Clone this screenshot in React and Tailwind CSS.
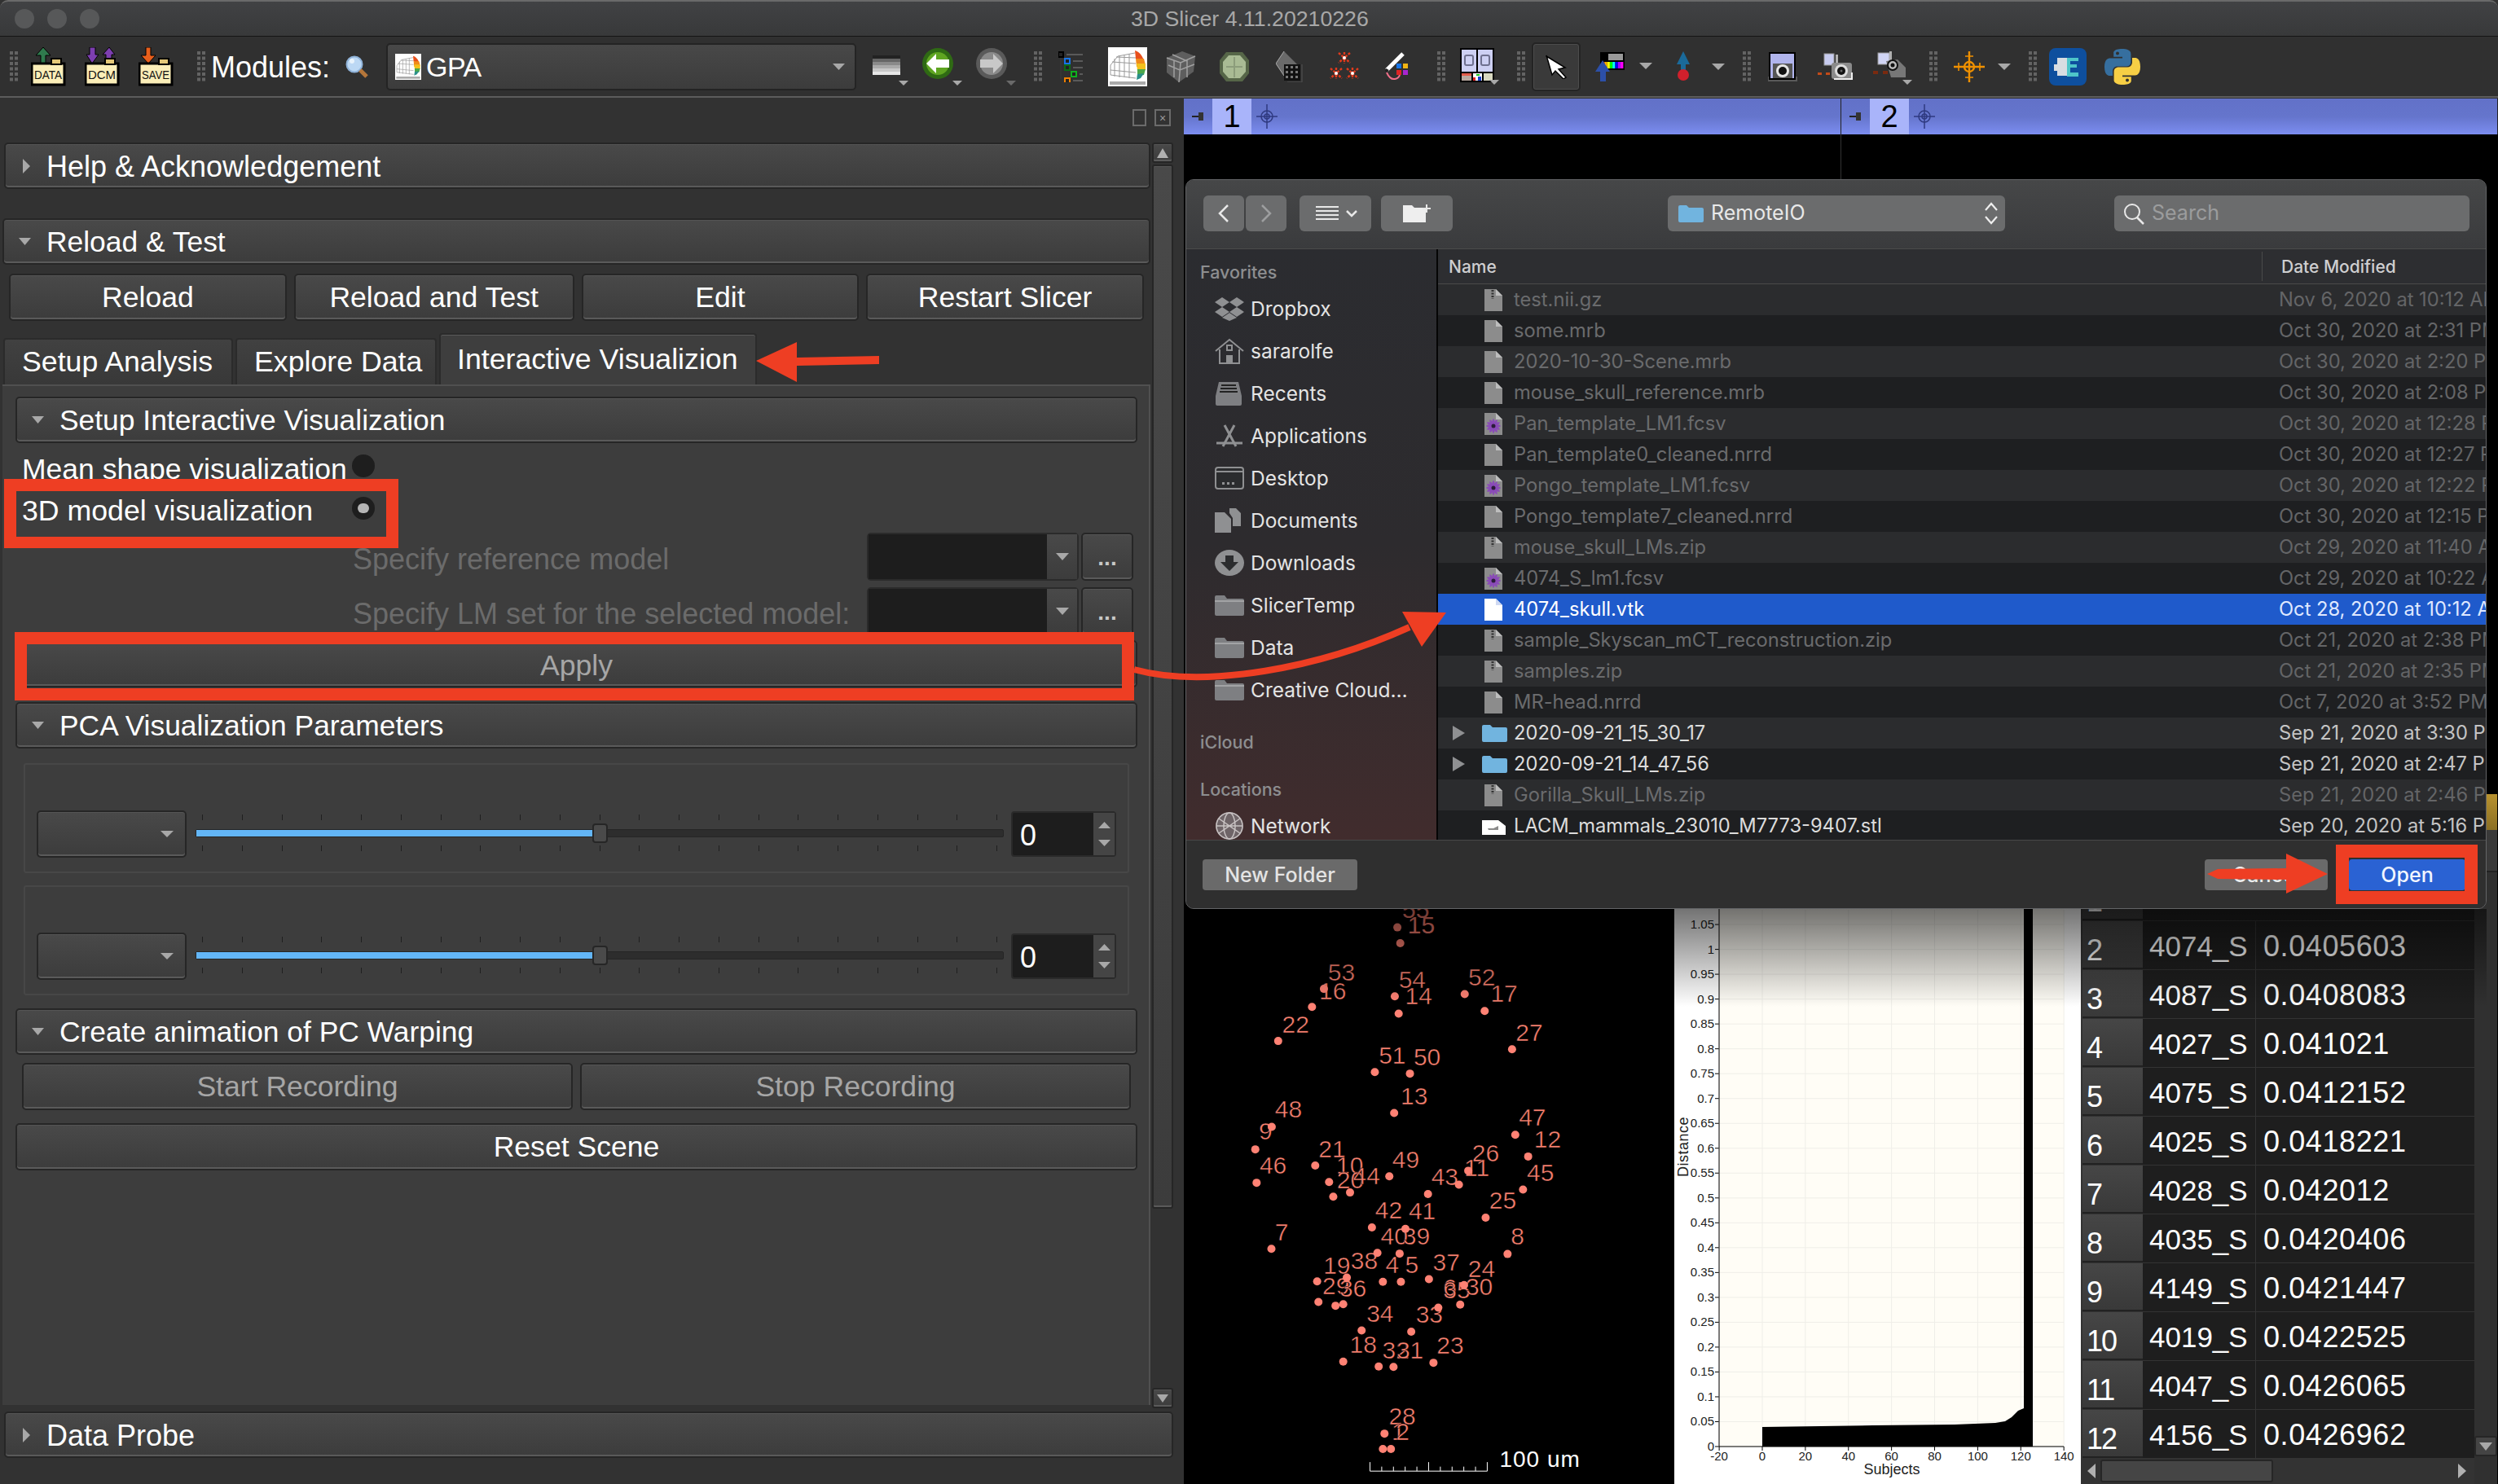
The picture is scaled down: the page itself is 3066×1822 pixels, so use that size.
import React from "react";

const RED = "#ee3e23";

function Grip({ className = "" }) {
  const c = [];
  for (let r = 0; r < 6; r++) for (let k = 0; k < 2; k++) c.push(<rect key={r + "-" + k} x={k * 6} y={r * 6.5} width="4" height="4" fill="#636363" />);
  return <svg width="10" height="37" className={"shrink-0 " + className}>{c}</svg>;
}
function Caret({ className = "", w = 14, h = 8, color = "#a8a8a8" }) {
  return <svg width={w} height={h} viewBox="0 0 14 8" preserveAspectRatio="none" className={"shrink-0 " + className}><polygon points="0,0 14,0 7,8" fill={color} /></svg>;
}
function DocTool({ label, arrows, className = "" }) {
  return (
    <svg width="44" height="48" viewBox="0 0 44 48" className={"shrink-0 " + className}>
      {arrows}
      <rect x="1" y="20" width="40" height="26" fill="#fbeeb8" stroke="#000" strokeWidth="3" />
      <rect x="25" y="14" width="12" height="7" fill="#e4c878" stroke="#000" strokeWidth="2" />
      <text x="21" y="39" fontSize="14" textLength="34" lengthAdjust="spacingAndGlyphs" textAnchor="middle" fill="#111">{label}</text>
    </svg>
  );
}
function GpaIcon({ size = 48, className = "" }) {
  return (
    <svg width={size} height={size} viewBox="0 0 48 48" className={"shrink-0 " + className}>
      <rect width="48" height="48" fill="#fff" />
      <g stroke="#9a9a9a" strokeWidth="1" fill="none">
        <path d="M3 22 L12 11 L33 7 M3 22 L3 34 L34 38 M8 14 L8 36 M14 11 L14 37 M20 10 L20 37 M26 8 L26 38 M3 28 L34 31 M5 18 L34 20 M10 12 L34 13" />
      </g>
      <path d="M33 4 C40 6 45 14 45 24 L44 18 L34 14Z" fill="#e8501c" />
      <path d="M34 14 L44 14 L46 22 L35 24Z" fill="#f08a1a" />
      <path d="M35 20 L46 20 L46 28 L36 29Z" fill="#f3c11c" />
      <path d="M36 27 L46 27 L44 34 L36 35Z" fill="#4da84a" />
      <path d="M36 33 L44 32 L40 38 L35 40Z" fill="#2a8f8a" />
      <rect x="2" y="42" width="44" height="4" fill="#aaa" />
    </svg>
  );
}
function ArrowBall({ dir, colorA, colorB }) {
  return (
    <svg width="49" height="48" viewBox="0 0 49 48" className="shrink-0">
      <circle cx="19" cy="20" r="19" fill={colorB} />
      <circle cx="19" cy="20" r="14" fill={colorA} />
      <polygon points={dir === "l" ? "5,20 17,8 17,15 33,15 33,25 17,25 17,32" : "33,20 21,8 21,15 5,15 5,25 21,25 21,32"} fill={dir === "l" ? "#fff" : "#c8c8c8"} />
      <polygon points="37,41 49,41 43,47" fill={dir === "l" ? "#a8a8a8" : "#6a6a6a"} />
    </svg>
  );
}
function CamIcon({ w = 44 }) {
  return (
    <svg width={w} height="34" viewBox="0 0 44 34" className="shrink-0">
      <rect x="8" y="1" width="12" height="14" fill="#c8ccf0" stroke="#999" />
      <path d="M0 25 L6 17 L14 17" stroke="#333" fill="none" />
      <rect x="0" y="24" width="5" height="3" fill="#c24a18" />
      <rect x="10" y="24" width="5" height="3" fill="#c24a18" />
      <rect x="22" y="2" width="3" height="12" fill="#b0b0b0" />
      <rect x="17" y="12" width="25" height="20" rx="3" fill="#8a8a8a" />
      <path d="M20 32 H42 V24" stroke="#eee" strokeWidth="2" fill="none" />
      <circle cx="29" cy="22" r="8" fill="#ddd" />
      <circle cx="29" cy="22" r="5" fill="#111" />
      <circle cx="29" cy="22" r="1.5" fill="#666" />
    </svg>
  );
}

function Toolbar() {
  return (
    <div className="flex h-[76px] shrink-0 items-center border-t border-[#151515] border-b-[2px] border-b-[#5c5c5c] bg-[#303030]">
      <Grip className="ml-[12px]" />
      <DocTool className="ml-[16px]" label="DATA" arrows={<g fill="#2f7a4d" stroke="#000"><polygon points="15,0 24,10 18,10 18,20 12,20 12,10 6,10" /></g>} />
      <DocTool className="ml-[22px]" label="DCM" arrows={<g fill="#7d3fb0" stroke="#000"><polygon points="6,20 14,9 10,9 10,0 3,0 3,9 -1,9" transform="translate(3 0)" /><polygon points="30,0 37,9 33,9 33,20 26,20 26,9 22,9" /></g>} />
      <DocTool className="ml-[22px]" label="SAVE" arrows={<g fill="#e85f1c" stroke="#000"><polygon points="12,20 21,10 15,10 15,0 9,0 9,10 3,10" /></g>} />
      <Grip className="ml-[28px]" />
      <span className="ml-[7px] w-[146px] pt-[2px] text-[36px] leading-none text-white">Modules:</span>
      <svg width="28" height="28" viewBox="0 0 28 28" className="ml-[19px] shrink-0">
        <circle cx="11" cy="11" r="9.5" fill="#bcd8f4" stroke="#8fb2d8" strokeWidth="2" />
        <circle cx="8" cy="7" r="3" fill="#e9f3fc" />
        <path d="M18 18 L26 26" stroke="#b5763a" strokeWidth="5" />
      </svg>
      <div className="ml-[22px] flex h-[58px] w-[577px] shrink-0 items-center rounded-[5px] border-2 border-[#242424] bg-linear-to-b from-[#484848] to-[#3c3c3c] pl-[9px] pr-[12px]">
        <GpaIcon size={32} />
        <span className="ml-[6px] text-[34px] leading-none tracking-[-0.5px] text-white">GPA</span>
        <Caret className="ml-auto" w={15} h={8} />
      </div>
      <svg width="44" height="48" viewBox="0 0 44 48" className="ml-[20px] shrink-0">
        <rect x="0" y="10" width="34" height="4" fill="#222" /><rect x="0" y="14" width="34" height="4" fill="#666" /><rect x="0" y="18" width="34" height="4" fill="#8a8a8a" /><rect x="0" y="22" width="34" height="4" fill="#aaa" /><rect x="0" y="26" width="34" height="4" fill="#c8c8c8" /><rect x="0" y="30" width="34" height="4" fill="#e6e6e6" />
        <polygon points="32,41 44,41 38,47" fill="#a8a8a8" />
      </svg>
      <div className="ml-[17px] shrink-0"><ArrowBall dir="l" colorA="#5fa521" colorB="#2f6a14" /></div>
      <div className="ml-[17px] shrink-0"><ArrowBall dir="r" colorA="#8a8a8a" colorB="#5a5a5a" /></div>
      <Grip className="ml-[22px]" />
      <svg width="40" height="38" viewBox="0 0 40 38" className="ml-[20px] shrink-0">
        <path d="M3 4 V34" stroke="#3a3a3a" />
        {[[0, 1, "#000"], [8, 9, "#1673e6"], [8, 17, "#0c6b16"], [16, 25, "#0fb01e"], [8, 33, "#f08000"]].map(([x, y, c], i) => (
          <g key={i}><rect x={x} y={y} width="6" height="6" fill="#222" stroke={c} strokeWidth="2" /><rect x={x + 10} y={y + 2} width={30 - x - 10} height="2" fill="#5a5a5a" /></g>
        ))}
      </svg>
      <div className="ml-[21px] shrink-0"><GpaIcon /></div>
      <svg width="40" height="42" viewBox="0 0 40 42" className="ml-[21px] shrink-0">
        <polygon points="3,10 22,2 38,8 36,27 18,40 3,28" fill="#5e5e5e" />
        <path d="M3 10 L20 16 L38 8 M20 16 L18 40 M10 6 L28 14 M12 13 L12 34 M28 12 L28 34 M5 19 L19 25 L37 18" stroke="#a0a0a0" strokeWidth="1.5" fill="none" />
      </svg>
      <svg width="40" height="40" viewBox="0 0 40 40" className="ml-[26px] shrink-0">
        <path d="M10 2 H30 L38 12 V28 L30 38 H10 L2 28 V12Z" fill="#566648" />
        <path d="M13 6 H27 L34 14 V26 L27 34 H13 L6 26 V14Z" fill="#a9bb94" />
        <path d="M20 8 V33 M10 20 H30" stroke="#8c9d7b" strokeWidth="2" />
      </svg>
      <svg width="36" height="38" viewBox="0 0 36 38" className="ml-[31px] shrink-0">
        <polygon points="10,0 26,16 10,30 0,15" fill="#6a6a6a" />
        <path d="M10 0 L0 15 L10 30" stroke="#aaa" fill="none" />
        <rect x="10" y="16" width="20" height="20" fill="#111" />
        {[12, 18, 24].map((x) => [18, 24, 30].map((y) => <rect key={x + "-" + y} x={x} y={y} width="3" height="3" fill="#777" />))}
        <path d="M32 16 V38 H14" stroke="#555" fill="none" />
      </svg>
      <svg width="36" height="36" viewBox="0 0 36 36" className="ml-[30px] shrink-0">
        {[[18, 7], [8, 26], [28, 26]].map(([x, y], i) => (
          <g key={i} stroke="#e23a1c" strokeWidth="2.4" strokeDasharray="3 1.5">
            <path d={`M${x - 7} ${y - 6} L${x + 7} ${y + 6} M${x + 7} ${y - 6} L${x - 7} ${y + 6} M${x} ${y - 7} V${y + 7}`} />
            <circle cx={x} cy={y} r="2" fill="#fff" stroke="none" />
          </g>
        ))}
      </svg>
      <svg width="28" height="36" viewBox="0 0 28 36" className="ml-[32px] shrink-0">
        <path d="M2 22 L22 2" stroke="#fff" strokeWidth="5" />
        <path d="M1 24 L3 21" stroke="#222" strokeWidth="4" />
        <rect x="14" y="14" width="6" height="6" fill="#1673e6" /><rect x="22" y="14" width="6" height="6" fill="#f0b414" /><rect x="14" y="22" width="6" height="6" fill="#e02424" /><rect x="22" y="22" width="6" height="6" fill="#a825d0" />
        <path d="M2 25 Q6 34 12 33 Q17 32 18 28" stroke="#f0708a" strokeWidth="2" fill="none" />
      </svg>
      <Grip className="ml-[36px]" />
      <svg width="48" height="46" viewBox="0 0 48 46" className="ml-[18px] shrink-0">
        <rect x="0" y="0" width="42" height="42" fill="#000" />
        <rect x="2" y="2" width="18" height="27" fill="#cdd0f3" /><rect x="22" y="2" width="18" height="27" fill="#cdd0f3" />
        <rect x="6" y="9" width="10" height="12" rx="2" fill="none" stroke="#6f7190" strokeWidth="2" /><rect x="26" y="9" width="10" height="12" rx="2" fill="none" stroke="#6f7190" strokeWidth="2" />
        <rect x="2" y="31" width="12" height="9" fill="#b9a8a0" /><rect x="2" y="31" width="12" height="3" fill="#e25b4b" />
        <rect x="16" y="31" width="11" height="9" fill="#fff" /><rect x="16" y="36" width="3" height="4" fill="#e02424" /><rect x="22" y="35" width="4" height="5" fill="#1a3fd0" /><rect x="20" y="32" width="4" height="2" fill="#1ec81e" />
        <rect x="29" y="31" width="11" height="9" fill="#d8d8c0" />
        <polygon points="36,39 48,39 42,45" fill="#a8a8a8" />
      </svg>
      <Grip className="ml-[22px]" />
      <div className="ml-[8px] flex h-[60px] w-[60px] shrink-0 items-center justify-center rounded-[5px] border-2 border-[#242424] bg-[#3a3a3a] shadow-[inset_0_0_0_1px_#4c4c4c]">
        <svg width="26" height="30" viewBox="0 0 26 30"><polygon points="1,1 1,2 24,16 16,18 25,28 22,30 12,20 8,25" fill="#fff" stroke="#000" strokeWidth="1.5" /></svg>
      </div>
      <svg width="70" height="40" viewBox="0 0 70 40" className="ml-[18px] shrink-0">
        <rect x="6" y="2" width="30" height="22" fill="#000" />
        <rect x="16" y="4" width="18" height="8" fill="#999" />
        {["#f00", "#fa0", "#ff0", "#0f0", "#0ff", "#00f", "#a0f", "#f0f"].map((c, i) => <rect key={c} x={8 + i * 3.3} y="14" width="3.3" height="8" fill={c} />)}
        <polygon points="9,12 18,26 13,26 13,38 6,38 6,26 0,26" fill="#2c4fa8" />
        <polygon points="54,15 70,15 62,23" fill="#a8a8a8" />
      </svg>
      <svg width="18" height="38" viewBox="0 0 18 38" className="ml-[29px] shrink-0">
        <polygon points="9,0 17,16 12,16 12,26 6,26 6,16 1,16" fill="#1a6a9a" />
        <circle cx="9" cy="29" r="7" fill="#d0202c" />
      </svg>
      <Caret className="ml-[26px]" w={16} h={8} />
      <Grip className="ml-[22px]" />
      <svg width="36" height="36" viewBox="0 0 36 36" className="ml-[21px] shrink-0">
        <rect x="0" y="30" width="36" height="6" fill="#5a5a5a" />
        <rect x="2" y="1" width="31" height="32" fill="#b0b4ec" stroke="#000" strokeWidth="2" />
        <rect x="6" y="14" width="24" height="18" fill="#555" />
        <circle cx="18" cy="23" r="8" fill="#e6e6e6" />
        <circle cx="18" cy="23" r="5" fill="#111" />
      </svg>
      <div className="ml-[25px] shrink-0"><CamIcon /></div>
      <svg width="48" height="46" viewBox="0 0 48 46" className="ml-[24px] shrink-0">
        <rect x="6" y="6" width="14" height="14" fill="#d0d4f4" stroke="#999" />
        <rect x="20" y="4" width="3" height="12" fill="#b0b0b0" />
        <rect x="0" y="28" width="6" height="4" fill="#7a2a10" /><rect x="12" y="28" width="6" height="4" fill="#7a2a10" />
        <polygon points="16,16 30,14 40,24 40,36 22,36" fill="#777" />
        <circle cx="24" cy="21" r="6" fill="#bbb" stroke="#111" strokeWidth="2" /><circle cx="24" cy="21" r="2.5" fill="#111" />
        <polygon points="36,39 48,39 42,45" fill="#a8a8a8" />
      </svg>
      <Grip className="ml-[21px]" />
      <svg width="38" height="38" viewBox="0 0 38 38" className="ml-[20px] shrink-0">
        <g stroke="#ef9000" strokeWidth="2.4" fill="none">
          <path d="M19 0 V38 M0 19 H38" /><circle cx="19" cy="19" r="6" />
          <path d="M14 6 H24 M14 32 H24 M6 14 V24 M32 14 V24" strokeWidth="1.6" />
        </g>
      </svg>
      <Caret className="ml-[16px]" w={16} h={8} />
      <Grip className="ml-[22px]" />
      <svg width="46" height="46" viewBox="0 0 46 46" className="ml-[15px] shrink-0">
        <rect width="46" height="46" rx="8" fill="#0e4f9e" />
        <path d="M10 12 H22 V20 H26 V28 H22 V34 H10 V28 H6 V20 H10Z" fill="#d8dde2" />
        <path d="M22 12 H36 V16 H26 V20 H34 V24 H26 V30 H36 V35 H22Z" fill="#4ec5c9" />
      </svg>
      <svg width="48" height="48" viewBox="0 0 24 24" className="ml-[20px] shrink-0">
        <path fillRule="evenodd" fill="#366f9f" d="M11.9 1C6.3 1 6.6 3.4 6.6 3.4v2.5h5.4v.8H4.5S1 6.3 1 12s3.1 5.5 3.1 5.5H6v-2.6s-.1-3.1 3-3.1h5.3s2.9 0 2.9-2.8V4s.4-3-5.3-3zM9 2.7a1 1 0 110 2 1 1 0 010-2z" />
        <path fillRule="evenodd" fill="#f7cf45" d="M12.1 23c5.6 0 5.3-2.4 5.3-2.4v-2.5H12v-.8h7.5s3.5.4 3.5-5.3-3.1-5.5-3.1-5.5H18v2.6s.1 3.1-3 3.1H9.7s-2.9 0-2.9 2.8V20s-.4 3 5.3 3zm2.9-1.7a1 1 0 110-2 1 1 0 010 2z" />
      </svg>
    </div>
  );
}

const frame = "border-2 border-[#262626] bg-linear-to-b from-[#494949] to-[#3c3c3c] shadow-[inset_0_-2px_0_#5a5a5a,inset_0_1px_0_#555]";

function CollapseHeader({ label, open = true, className = "" }) {
  return (
    <div className={"flex h-[57px] shrink-0 items-center rounded-[5px] " + frame + " " + className}>
      {open ? (
        <Caret w={15} h={9} className="ml-[18px]" />
      ) : (
        <svg width="9" height="18" className="ml-[21px] shrink-0"><polygon points="0,0 9,9 0,18" fill="#a8a8a8" /></svg>
      )}
      <span className={(open ? "ml-[19px] text-[35.4px]" : "ml-[20px] text-[36px]") + " pt-[2px] leading-none text-white"}>{label}</span>
    </div>
  );
}
function QtButton({ children, className = "", dim = false }) {
  return (
    <div className={"flex h-[58px] items-center justify-center rounded-[5px] pt-[2px] text-[35.6px] leading-none " + frame + " " + (dim ? "text-[#a6a6a6] " : "text-white ") + className}>
      {children}
    </div>
  );
}
function Radio({ checked, className = "" }) {
  return (
    <span className={"flex h-[28px] w-[28px] shrink-0 items-center justify-center rounded-full bg-[#1e1e1e] " + className}>
      {checked && <span className="h-[12px] w-[14px] rounded-full bg-[#b5b5b5]" />}
    </span>
  );
}
function ComboRow({ label, className = "" }) {
  return (
    <div className={"flex h-[59px] shrink-0 items-center " + className}>
      <span className="ml-[414px] w-[631px] whitespace-nowrap pt-[6px] text-[36px] leading-none text-[#6b6b6b]">{label}</span>
      <div className="flex h-[59px] w-[260px] rounded-[5px] border-2 border-[#2b2b2b] bg-[#4a4a4a]">
        <div className="w-[219px] bg-[#1d1d1d]" />
        <div className="flex flex-1 items-center justify-center bg-linear-to-b from-[#494949] to-[#3c3c3c]"><Caret w={16} h={9} /></div>
      </div>
      <div className={"ml-[3px] flex h-[59px] w-[64px] items-end justify-center rounded-[5px] pb-[12px] text-[28px] font-bold leading-none text-[#c8c8c8] " + frame}>...</div>
    </div>
  );
}
const TICKS = Array.from({ length: 21 }, (_, i) => i);
function Ticks({ className = "" }) {
  return (
    <div className={"flex h-[7px] justify-between px-[8px] " + className}>
      {TICKS.map((i) => <span key={i} className="h-[7px] w-px bg-[#1f1f1f]" />)}
    </div>
  );
}
function SliderGroup() {
  return (
    <div className="mx-[10px] flex h-[135px] shrink-0 items-start rounded-[3px] border-2 border-[#474747] pl-[14px] pt-[56px]">
      <div className={"flex h-[58px] w-[184px] shrink-0 items-center justify-end rounded-[5px] pr-[14px] " + frame}><Caret w={16} h={8} /></div>
      <div className="ml-[11px] w-[992px] shrink-0 pt-[5px]">
        <Ticks />
        <div className="relative mt-[11px] h-[10px] rounded-[2px] border border-[#252525] bg-[#2d2d2d]">
          <div className="h-full w-[487px] bg-[#63b6f7]" />
          <div className="absolute left-[486px] top-[-8px] h-[24px] w-[19px] rounded-[4px] border-2 border-[#262626] bg-[#4a4a4a]" />
        </div>
        <Ticks className="mt-[10px]" />
      </div>
      <div className="ml-[9px] mt-[1px] flex h-[56px] w-[129px] shrink-0 rounded-[4px] border-2 border-[#2a2a2a] bg-[#1d1d1d]">
        <span className="ml-[9px] flex-1 pt-[10px] text-[36px] leading-none text-white">0</span>
        <div className="flex w-[26px] flex-col items-center justify-around bg-[#454545] py-[4px]">
          <svg width="15" height="8"><polygon points="7.5,0 15,8 0,8" fill="#a8a8a8" /></svg>
          <Caret w={15} h={8} />
        </div>
      </div>
    </div>
  );
}

function TabBtn({ label, active, w }) {
  return (
    <div className={"flex items-center rounded-t-[4px] border-2 border-b-0 border-[#2b2b2b] text-[35.7px] leading-none text-white " + w + " " + (active ? "h-[64px] bg-[#3e3e3e] pl-[20px] shadow-[inset_0_1px_0_#5a5a5a]" : "h-[58px] bg-linear-to-b from-[#414141] to-[#383838] pl-[21px]")}>
      {label}
    </div>
  );
}

function LeftPanel() {
  return (
    <div className="flex w-[1453px] shrink-0 flex-col bg-[#323232] pl-[3px]">
      <div className="flex h-[54px] shrink-0 items-start justify-end pr-[16px] pt-[13px]">
        <span className="h-[21px] w-[17px] border-2 border-[#6b6b6b]" />
        <span className="ml-[10px] flex h-[21px] w-[20px] items-center justify-center border-2 border-[#6b6b6b] text-[14px] leading-none text-[#9a9a9a]">×</span>
      </div>
      <div className="flex flex-1 min-h-0">
        <div className="flex w-[1409px] shrink-0 flex-col pb-[4px]">
          <CollapseHeader label="Help & Acknowledgement" open={false} className="ml-[2px]" />
          <CollapseHeader label="Reload & Test" className="mt-[36px]" />
          <div className="mt-[11px] flex gap-[9px] pl-[8px] pr-[8px]">
            <QtButton className="w-[341px]">Reload</QtButton>
            <QtButton className="w-[344px]">Reload and Test</QtButton>
            <QtButton className="w-[341px]">Edit</QtButton>
            <QtButton className="w-[341px]">Restart Slicer</QtButton>
          </div>
          <div className="mt-[15px] flex h-[64px] items-end gap-[3px] pl-[1px]">
            <TabBtn label="Setup Analysis" w="w-[282px]" />
            <TabBtn label="Explore Data" w="w-[247px]" />
            <TabBtn label="Interactive Visualizion" active w="w-[390px]" />
          </div>
          <div className="-mt-[1px] flex flex-1 flex-col border-t-2 border-r-2 border-[#505050] bg-[#3d3d3d] pl-[16px] pr-[14px] pt-[13px]">
            <CollapseHeader label="Setup Interactive Visualization" />
            <div className="flex h-[50px] shrink-0 items-center pl-[8px] pt-[16px] text-[35.5px] leading-none text-white">
              <span className="w-[405px] whitespace-nowrap">Mean shape visualization</span><Radio className="-mt-[10px]" />
            </div>
            <div className="flex h-[50px] shrink-0 items-center pl-[8px] pt-[18px] text-[35.7px] leading-none text-white">
              <span className="w-[405px] whitespace-nowrap">3D model visualization</span><Radio checked className="-mt-[8px]" />
            </div>
            <ComboRow label="Specify reference model" className="mt-[10px]" />
            <ComboRow label="Specify LM set for the selected model:" className="mt-[8px]" />
            <QtButton dim className="mt-[6px] shrink-0 pt-[5px]">Apply</QtButton>
            <CollapseHeader label="PCA Visualization Parameters" className="mt-[18px]" />
            <div className="h-[18px] shrink-0" />
            <SliderGroup />
            <div className="h-[15px] shrink-0" />
            <SliderGroup />
            <CollapseHeader label="Create animation of PC Warping" className="mt-[16px]" />
            <div className="mt-[10px] flex shrink-0 gap-[9px] px-[8px]">
              <QtButton dim className="flex-1">Start Recording</QtButton>
              <QtButton dim className="flex-1">Stop Recording</QtButton>
            </div>
            <QtButton className="mt-[16px] shrink-0">Reset Scene</QtButton>
          </div>
        </div>
        <div className="ml-[2px] flex w-[26px] shrink-0 flex-col">
          <div className={"flex h-[25px] items-center justify-center rounded-[3px] " + frame}><svg width="14" height="12"><polygon points="7,0 14,12 0,12" fill="#b0b0b0" /></svg></div>
          <div className={"mt-[2px] h-[1282px] rounded-[3px] " + frame} />
          <div className="flex-1" />
          <div className={"flex h-[25px] items-center justify-center rounded-[3px] " + frame}><Caret w={14} h={10} /></div>
        </div>
      </div>
      <CollapseHeader label="Data Probe" open={false} className="ml-[2px] mb-[32px] mr-[13px] mt-[4px]" />
    </div>
  );
}

function Pin({ className = "" }) {
  return <svg width="16" height="16" viewBox="0 0 16 16" className={"shrink-0 " + className}><rect x="0" y="7" width="10" height="2" fill="#222" /><polygon points="8,3 14,3 14,13 8,13" fill="#333" /></svg>;
}
function Cross({ className = "" }) {
  return (
    <svg width="26" height="30" viewBox="0 0 26 30" className={"shrink-0 " + className}>
      <g fill="none" stroke="#2f3a80" strokeWidth="1.5"><circle cx="13" cy="15" r="7" /><circle cx="13" cy="15" r="3" /><path d="M13 0 V30 M0 15 H26" /></g>
    </svg>
  );
}
function ViewBar({ n, w }) {
  return (
    <div className={"flex h-[44px] items-stretch border-r border-[#222] bg-linear-to-b from-[#6271c8] via-[#6575cc] to-[#7c8df0] " + w}>
      <Pin className="ml-[10px] self-center" />
      <span className="ml-[9px] flex w-[48px] items-center justify-center bg-[#a9b4fa] text-[38px] leading-none text-black">{n}</span>
      <Cross className="ml-[6px] self-center" />
    </div>
  );
}

const LM = {
  t: [["53",457,227],["16",430,277],["54",677,247],["14",697,292],["52",893,242],["17",962,285],["22",315,367],["27",1040,388],["51",615,450],["50",723,453],["13",683,558],["48",293,594],["9",243,652],["47",1050,615],["12",1097,674],["21",428,699],["10",483,742],["46",245,743],["20",485,783],["44",535,770],["49",657,727],["26",905,711],["11",880,750],["43",778,774],["45",1075,763],["25",958,836],["42",604,863],["41",708,865],["40",621,932],["39",690,932],["7",293,920],["8",1025,932],["19",443,1010],["38",528,998],["4",636,1008],["5",697,1008],["37",783,1002],["24",892,1018],["29",440,1064],["36",493,1070],["6",815,1068],["35",815,1076],["30",885,1067],["34",577,1138],["33",730,1140],["18",525,1220],["32",626,1236],["31",670,1236],["23",795,1223],["28",646,1412],["1",655,1452],["2",668,1452]],
  d: [[445,250],[408,298],[665,270],[677,316],[882,264],[944,309],[303,389],[1029,411],[603,472],[712,476],[663,581],[283,618],[232,678],[1039,639],[1079,697],[418,721],[236,767],[461,765],[474,804],[526,793],[648,750],[893,735],[864,772],[768,797],[1063,785],[947,860],[594,886],[698,890],[611,954],[680,956],[282,943],[1015,957],[424,1030],[516,1020],[628,1031],[684,1031],[771,1024],[880,1040],[428,1085],[481,1095],[505,1091],[868,1092],[800,1100],[562,1161],[716,1164],[505,1244],[615,1257],[661,1258],[785,1247],[633,1436],[628,1477],[653,1477]],
};
const X = (z) => 1450 + z / 2.529;
const Y = (z) => 1100 + z / 2.172;

function Landmarks() {
  const tick = [];
  for (let i = 0; i <= 10; i++) tick.push(<path key={i} d={`M${X(588 + i * 36.4)} ${Y(1536)} V${Y(i % 5 === 0 ? 1512 : 1524)}`} />);
  return (
    <div className="relative w-[602px] shrink-0 bg-black">
      <svg viewBox="1454 976 602 846" width="602" height="846" className="absolute left-0 top-0">
        <text x={X(688)} y={Y(60)} fontSize="30" fill="#fa7f70">55</text>
        <text x={X(705)} y={Y(103)} fontSize="30" fill="#fa7f70">15</text>
        <circle cx={X(673)} cy={Y(86)} r="5" fill="#fa7f70" /><circle cx={X(682)} cy={Y(128)} r="5" fill="#fa7f70" />
        {LM.t.map(([s, x, y], i) => <text key={i} x={X(x)} y={Y(y)} fontSize="30" fill="#f8806f" stroke="#000" strokeWidth="0.5" paintOrder="fill">{s}</text>)}
        {LM.d.map(([x, y], i) => <circle key={i} cx={X(x)} cy={Y(y)} r="5" fill="#ff8274" />)}
        <g stroke="#fff" strokeWidth="1" fill="none">
          <path d={`M${X(588)} ${Y(1536)} H${X(952)}`} />
          {tick}
        </g>
        <text x={X(990)} y={Y(1525)} fontSize="28" fill="#fff" letterSpacing="1">100 um</text>
      </svg>
    </div>
  );
}

function Chart() {
  const yt = [];
  for (let i = 0; i <= 21; i++) {
    const v = i * 0.05;
    const label = i % 20 === 0 ? String(i / 20) : i % 2 === 0 ? String(i / 20) : v.toFixed(2);
    const y = 1777 - i * 30.52;
    yt.push(
      <g key={i}>
        <path d={`M2111 ${y} H2534`} stroke="#efeee8" />
        <path d={`M2106 ${y} H2111`} stroke="#000" />
        <text x="2105" y={y + 5} fontSize="15" textAnchor="end" fill="#222">{label}</text>
      </g>
    );
  }
  const xt = [-20, 0, 20, 40, 60, 80, 100, 120, 140].map((v) => {
    const x = 2164 + v * 2.644;
    return (
      <g key={v}>
        <path d={`M${x} 1118 V1777`} stroke="#efeee8" />
        <path d={`M${x} 1777 V1782`} stroke="#000" />
        <text x={x} y="1794" fontSize="15" textAnchor="middle" fill="#222">{v}</text>
      </g>
    );
  });
  return (
    <div className="w-[499px] shrink-0 bg-white">
      <svg viewBox="2056 976 499 846" width="499" height="846">
        <rect x="2111" y="976" width="423" height="801" fill="#fffdf6" />
        {yt}{xt}
        <path d="M2164 1777 V1753 L2300 1751 L2400 1750 L2450 1748 L2462 1746 L2470 1741 L2478 1733 L2485 1730 V976 H2496 V1777Z" fill="#000" />
        <path d="M2111 976 V1777 H2534" stroke="#000" fill="none" />
        <text transform="translate(2073 1409) rotate(-90)" fontSize="18" textAnchor="middle" fill="#222" letterSpacing="0.5">Distance</text>
        <text x="2323" y="1811" fontSize="18" textAnchor="middle" fill="#222">Subjects</text>
      </svg>
    </div>
  );
}

const ROWS = [["2","4074_S","0.0405603"],["3","4087_S","0.0408083"],["4","4027_S","0.041021"],["5","4075_S","0.0412152"],["6","4025_S","0.0418221"],["7","4028_S","0.042012"],["8","4035_S","0.0420406"],["9","4149_S","0.0421447"],["10","4019_S","0.0422525"],["11","4047_S","0.0426065"],["12","4156_S","0.0426962"]];

function TableView() {
  const head = "flex w-[74px] shrink-0 items-end border-b-2 border-[#222] bg-linear-to-b from-[#464646] to-[#393939] pb-[3px] pl-[5px]";
  return (
    <div className="flex w-[511px] shrink-0 flex-col overflow-hidden bg-[#333]">
      <div className="h-[44px] shrink-0 bg-linear-to-b from-[#b8922f] to-[#8c7024]" />
      <div className="h-[52px] shrink-0 border-b-2 border-[#222] bg-[#3a3a3a]" />
      <div className="flex min-h-0 flex-1">
        <div className="ml-[2px] flex w-[481px] shrink-0 flex-col bg-[#1e1e1e] text-white">
          <div className="flex min-h-0 flex-1 flex-col overflow-hidden">
            <div className="flex h-[60px] shrink-0 border-b border-[#333]"><div className={head + " text-[36px] leading-none"}>1</div></div>
            {ROWS.map(([n, a, b]) => (
              <div key={n} className="flex h-[60px] shrink-0 border-b border-[#333] text-[36px] leading-none">
                <div className={head}><span className={n.length > 1 ? "tracking-[-2px]" : ""}>{n}</span></div>
                <div className="flex w-[139px] shrink-0 items-center border-r border-[#333] pl-[8px] pt-[2px] text-[35px]">{a}</div>
                <div className="flex flex-1 items-center pl-[9px] pt-[2px] tracking-[0.6px]">{b}</div>
              </div>
            ))}
          </div>
          <div className="flex h-[32px] shrink-0 items-center gap-[6px] bg-[#333] pl-[6px] pr-[6px]">
            <svg width="10" height="18" className="shrink-0"><polygon points="10,0 0,9 10,18" fill="#b0b0b0" /></svg>
            <div className="h-[28px] w-[212px] rounded-[3px] border-2 border-[#262626] bg-[#454545]" />
            <svg width="10" height="18" className="ml-auto mr-[4px] shrink-0"><polygon points="0,0 10,9 0,18" fill="#b0b0b0" /></svg>
          </div>
        </div>
        <div className="flex w-[28px] shrink-0 flex-col justify-end bg-[#303030]">
          <div className="mb-[34px] flex h-[25px] items-center justify-center rounded-[3px] border-2 border-[#262626] bg-[#444]"><Caret w={16} h={10} /></div>
        </div>
      </div>
    </div>
  );
}

function DocIcon({ kind, sel }) {
  const c = sel ? "#ffffff" : "#8c8c8c";
  return (
    <svg width="24" height="29" viewBox="0 0 24 29" className="ml-[56px] shrink-0">
      <path d="M1 1 H15 L23 9 V28 H1Z" fill={c} />
      <path d="M15 1 V9 H23" fill={sel ? "#cfd9f2" : "#bdbdbd"} />
      {kind === "zip" && <path d="M11 2 V13" stroke="#333" strokeWidth="3" strokeDasharray="2 1.5" />}
      {kind === "fcsv" && (
        <g>
          {[0, 30, 60, 90, 120, 150].map((a) => <ellipse key={a} cx="12" cy="17" rx="9" ry="2" fill="#8a4bb8" transform={`rotate(${a} 12 17)`} />)}
          <circle cx="12" cy="17" r="2.5" fill="#2b1c3a" />
        </g>
      )}
    </svg>
  );
}

const FILES = [
  ["test.nii.gz","Nov 6, 2020 at 10:12 AM","zip"],
  ["some.mrb","Oct 30, 2020 at 2:31 PM","doc"],
  ["2020-10-30-Scene.mrb","Oct 30, 2020 at 2:20 PM","doc"],
  ["mouse_skull_reference.mrb","Oct 30, 2020 at 2:08 PM","doc"],
  ["Pan_template_LM1.fcsv","Oct 30, 2020 at 12:28 PM","fcsv"],
  ["Pan_template0_cleaned.nrrd","Oct 30, 2020 at 12:27 PM","doc"],
  ["Pongo_template_LM1.fcsv","Oct 30, 2020 at 12:22 PM","fcsv"],
  ["Pongo_template7_cleaned.nrrd","Oct 30, 2020 at 12:15 PM","doc"],
  ["mouse_skull_LMs.zip","Oct 29, 2020 at 11:40 AM","zip"],
  ["4074_S_lm1.fcsv","Oct 29, 2020 at 10:22 AM","fcsv"],
  ["4074_skull.vtk","Oct 28, 2020 at 10:12 AM","sel"],
  ["sample_Skyscan_mCT_reconstruction.zip","Oct 21, 2020 at 2:38 PM","zip"],
  ["samples.zip","Oct 21, 2020 at 2:35 PM","zip"],
  ["MR-head.nrrd","Oct 7, 2020 at 3:52 PM","doc"],
  ["2020-09-21_15_30_17","Sep 21, 2020 at 3:30 PM","folder"],
  ["2020-09-21_14_47_56","Sep 21, 2020 at 2:47 PM","folder"],
  ["Gorilla_Skull_LMs.zip","Sep 21, 2020 at 2:46 PM","zip"],
  ["LACM_mammals_23010_M7773-9407.stl","Sep 20, 2020 at 5:16 PM","stl"],
];

function FileRow({ name, date, kind, i }) {
  const sel = kind === "sel";
  const active = kind === "folder" || kind === "stl";
  const bg = sel ? "bg-[#1f5acb]" : i % 2 === 0 ? "bg-[#2b2c2e]" : "bg-[#1e1f21]";
  const nameC = sel ? "text-white" : active ? "text-[#dcdcdc]" : "text-[#6a6b6d]";
  const dateC = sel ? "text-[#dfe8ff]" : active ? "text-[#c4c4c4]" : "text-[#646567]";
  return (
    <div className={"flex h-[38px] shrink-0 items-center whitespace-nowrap text-[23.7px] leading-none " + bg}>
      <div className={"flex w-[1012px] shrink-0 items-center overflow-hidden " + nameC}>
        {kind === "folder" ? (
          <>
            <svg width="15" height="18" className="ml-[18px] shrink-0"><polygon points="0,0 15,9 0,18" fill="#8f9092" /></svg>
            <svg width="31" height="22" viewBox="0 0 31 22" className="ml-[21px] shrink-0"><path d="M0 3 Q0 1 2 1 H10 L13 4 H29 Q31 4 31 6 V20 Q31 22 29 22 H2 Q0 22 0 20Z" fill="#71b4df" /></svg>
            <span className="ml-[8px]">{name}</span>
          </>
        ) : kind === "stl" ? (
          <>
            <svg width="29" height="22" viewBox="0 0 29 22" className="ml-[54px] shrink-0"><path d="M0 4 H20 L29 11 V22 H0Z" fill="#fff" /><path d="M7 14 H14 L20 11 V16 H8Z" fill="#8a8a8a" /></svg>
            <span className="ml-[10px]">{name}</span>
          </>
        ) : (
          <>
            <DocIcon kind={sel ? "doc" : kind} sel={sel} />
            <span className="ml-[13px]">{name}</span>
          </>
        )}
      </div>
      <span className={"ml-[20px] " + dateC}>{date}</span>
    </div>
  );
}

function GrayFolder() {
  return <svg width="36" height="26" viewBox="0 0 36 26"><path d="M0 3 Q0 1 2 1 H12 L15 5 H34 Q36 5 36 7 V24 Q36 26 34 26 H2 Q0 26 0 24Z" fill="#7e7f82" /><rect x="0" y="7" width="36" height="2" fill="#a2a3a5" /></svg>;
}
const SIDE = [
  ["Dropbox", <svg width="36" height="30" viewBox="0 0 36 30"><g fill="#8f9092"><polygon points="9,1 18,7 9,13 0,7" /><polygon points="27,1 36,7 27,13 18,7" /><polygon points="9,13 18,19 9,25 0,19" /><polygon points="27,13 36,19 27,25 18,19" /><polygon points="18,20 27,26 18,30 9,26" /></g></svg>],
  ["sararolfe", <svg width="36" height="32" viewBox="0 0 36 32"><g fill="none" stroke="#8f9092" strokeWidth="2"><path d="M1 16 L18 2 L35 16" /><path d="M6 14 V31 H30 V14" /><rect x="15" y="9" width="6" height="6" /></g><rect x="14" y="21" width="8" height="10" fill="#8f9092" /></svg>],
  ["Recents", <svg width="34" height="30" viewBox="0 0 34 30"><path d="M5 1 H29 L33 18 V28 Q33 30 31 30 H3 Q1 30 1 28 V18Z" fill="#7e7f82" /><rect x="8" y="4" width="18" height="2" fill="#222" /><rect x="7" y="8" width="20" height="2" fill="#222" /><rect x="6" y="12" width="22" height="2" fill="#222" /></svg>],
  ["Applications", <svg width="36" height="30" viewBox="0 0 36 30"><g stroke="#8f9092" strokeWidth="3" fill="none"><path d="M12 2 L26 28 M24 2 L10 28" /><path d="M2 24 H34" /></g></svg>],
  ["Desktop", <svg width="36" height="28" viewBox="0 0 36 28"><rect x="1" y="1" width="34" height="26" rx="3" fill="#2b2c2e" stroke="#8f9092" strokeWidth="2" /><path d="M2 6 H34" stroke="#8f9092" strokeWidth="2" /><rect x="9" y="19" width="3" height="3" fill="#8f9092" /><rect x="15" y="19" width="3" height="3" fill="#8f9092" /><rect x="21" y="19" width="3" height="3" fill="#8f9092" /></svg>],
  ["Documents", <svg width="32" height="30" viewBox="0 0 32 30"><path d="M0 5 H12 L20 13 V30 H0Z" fill="#8f9092" /><path d="M18 0 H26 L32 6 V22 H22 V12 L18 6Z" fill="#8f9092" /></svg>],
  ["Downloads", <svg width="36" height="32" viewBox="0 0 36 32"><ellipse cx="18" cy="16" rx="18" ry="16" fill="#8f9092" /><path d="M13 7 H23 V15 H29 L18 26 L7 15 H13Z" fill="#2b2c2e" /></svg>],
  ["SlicerTemp", <GrayFolder />],
  ["Data", <GrayFolder />],
  ["Creative Cloud…", <GrayFolder />],
];

function SideItem({ label, icon, className = "" }) {
  return (
    <div className={"flex h-[52px] shrink-0 items-center text-[24.5px] leading-none text-[#e4e4e4] " + className}>
      <span className="ml-[35px] flex w-[44px] shrink-0 justify-start">{icon}</span>
      {label}
    </div>
  );
}

function ToolBtn({ className = "", children }) {
  return <div className={"flex h-[44px] items-center justify-center rounded-[6px] bg-[#6b6c6d] " + className}>{children}</div>;
}

function FileDialog() {
  return (
    <div className="absolute left-[1455px] top-[220px] z-10 flex h-[896px] w-[1597px] flex-col overflow-hidden rounded-[10px] border border-[#636466] bg-[#2e2e2e] [font-family:Inter,sans-serif]">
      <div className="flex h-[85px] shrink-0 items-center border-b border-[#4b4b4b] bg-linear-to-b from-[#464748] to-[#3a3b3d] pl-[21px] pb-[2px]">
        <ToolBtn className="w-[50px]">
          <svg width="18" height="26" viewBox="0 0 18 26"><path d="M14 3 L4 13 L14 23" stroke="#e8e8e8" strokeWidth="2.5" fill="none" /></svg>
        </ToolBtn>
        <ToolBtn className="ml-[2px] w-[50px]">
          <svg width="18" height="26" viewBox="0 0 18 26"><path d="M4 3 L14 13 L4 23" stroke="#9d9e9f" strokeWidth="2.5" fill="none" /></svg>
        </ToolBtn>
        <ToolBtn className="ml-[16px] w-[88px]">
          <svg width="66" height="22" viewBox="0 0 66 22"><path d="M9 3 H37 M9 8 H37 M9 13 H37 M9 18 H37" stroke="#e8e8e8" strokeWidth="2" /><path d="M47 8 L53 14 L59 8" stroke="#e8e8e8" strokeWidth="2.5" fill="none" /></svg>
        </ToolBtn>
        <ToolBtn className="ml-[12px] w-[88px]">
          <svg width="36" height="26" viewBox="0 0 36 26"><path d="M1 3 H12 L15 6 H27 Q29 6 29 8 V24 H1Z" fill="#eee" /><path d="M30 2 V12 M25 7 H35" stroke="#e8e8e8" strokeWidth="2" /></svg>
        </ToolBtn>
        <ToolBtn className="ml-[264px] w-[414px] justify-start pl-[13px] text-[25px] text-[#e8e8e8]">
          <svg width="31" height="22" viewBox="0 0 31 22"><path d="M0 3 Q0 1 2 1 H10 L13 4 H29 Q31 4 31 6 V20 Q31 22 29 22 H2 Q0 22 0 20Z" fill="#71b4df" /></svg>
          <span className="ml-[9px]">RemoteIO</span>
          <svg width="18" height="32" viewBox="0 0 18 32" className="ml-auto mr-[8px]"><path d="M2 12 L9 4 L16 12 M2 20 L9 28 L16 20" stroke="#eee" strokeWidth="2.2" fill="none" /></svg>
        </ToolBtn>
        <ToolBtn className="ml-[134px] w-[436px] justify-start pl-[11px] text-[25px] text-[#9b9c9d]">
          <svg width="26" height="28" viewBox="0 0 26 28"><circle cx="11" cy="12" r="9" stroke="#e8e8e8" strokeWidth="2" fill="none" /><path d="M17 19 L25 27" stroke="#e8e8e8" strokeWidth="2.5" /></svg>
          <span className="ml-[9px]">Search</span>
        </ToolBtn>
      </div>
      <div className="flex min-h-0 flex-1">
        <div className="flex w-[309px] shrink-0 flex-col overflow-hidden border-r-2 border-[#050505] bg-linear-to-b from-[#2b2c30] via-[#2d2b2e] to-[#412c2d] pt-[15px]">
          <div className="flex h-[28px] shrink-0 items-center pl-[17px] text-[21.5px] font-medium leading-none text-[#8d8e90]">Favorites</div>
          <div className="h-[4px] shrink-0" />
          {SIDE.map(([l, ic]) => <SideItem key={l} label={l} icon={ic} />)}
          <div className="mt-[25px] flex h-[28px] shrink-0 items-center pl-[17px] text-[21.5px] font-medium leading-none text-[#8d8e90]">iCloud</div>
          <div className="mt-[30px] flex h-[28px] shrink-0 items-center pl-[17px] text-[21.5px] font-medium leading-none text-[#8d8e90]">Locations</div>
          <SideItem className="mt-[4px]" label="Network" icon={
            <svg width="36" height="36" viewBox="0 0 36 36"><circle cx="18" cy="18" r="17" fill="#6e6467" /><g stroke="#c8c2c2" strokeWidth="1.5" fill="none"><circle cx="18" cy="18" r="16" /><ellipse cx="18" cy="18" rx="7" ry="16" /><path d="M2 18 H34 M5 9 L31 27 M5 27 L31 9" /></g></svg>
          } />
        </div>
        <div className="flex min-w-0 flex-1 flex-col overflow-hidden bg-[#2b2c2e]">
          <div className="flex h-[43px] shrink-0 items-center border-b border-[#4a4a4a] bg-[#2d2e31] text-[21px] font-medium leading-none text-[#cfcfd0]">
            <span className="ml-[13px] w-[998px]">Name</span>
            <span className="h-[36px] w-px bg-[#4a4a4a]" />
            <span className="ml-[23px]">Date Modified</span>
          </div>
          {FILES.map(([n, d, k], i) => <FileRow key={n} name={n} date={d} kind={k} i={i} />)}
        </div>
      </div>
      <div className="relative flex h-[84px] shrink-0 items-center border-t border-[#484848] bg-[#2f2f2f] pt-[1px] text-[25px] leading-none">
        <div className="ml-[20px] flex h-[38px] w-[190px] items-center justify-center rounded-[4px] bg-[#6a6a6a] font-medium text-[#e4e4e4]">New Folder</div>
        <div className="ml-[1040px] flex h-[38px] w-[151px] items-center justify-center rounded-[4px] bg-[#6a6a6a] font-medium text-[#eeeeee]">Cancel</div>
        <div className="ml-[26px] flex h-[38px] w-[143px] items-center justify-center rounded-[4px] bg-[#2a62d3] font-medium text-[#f2f6ff]">Open</div>
      </div>
    </div>
  );
}

function Annotations() {
  return (
    <>
      <div className="absolute left-[5px] top-[588px] z-20 h-[85px] w-[484px] border-x-[15px] border-t-[15px] border-b-[14px] border-[#ee3e23]" />
      <div className="absolute left-[18px] top-[776px] z-20 h-[84px] w-[1374px] border-[15px] border-[#ee3e23]" />
      <div className="absolute left-[2867px] top-[1037px] z-20 h-[73px] w-[174px] border-x-[16px] border-y-[16px] border-[#ee3e23]" />
      <svg width="3066" height="1822" className="pointer-events-none absolute left-0 top-0 z-20">
        <polygon points="928,443 978,420 978,439 1079,437 1079,447 978,449 978,469" fill={RED} />
        <polygon points="2709,1073 2722,1067 2806,1066 2806,1048 2857,1073 2806,1097 2806,1080 2722,1079" fill={RED} />
        <path d="M1392 822 C1480 846 1620 820 1730 770" stroke={RED} strokeWidth="8" fill="none" />
        <polygon points="1775,752 1721,751 1745,794" fill={RED} />
      </svg>
    </>
  );
}

export default function App() {
  return (
    <div className="relative flex h-[1822px] w-[3066px] flex-col overflow-hidden bg-[#323232] [font-family:'Liberation_Sans',Arial,sans-serif]">
      <div className="flex h-[44px] shrink-0 items-center rounded-t-[10px] border-t-2 border-[#6a6a6a] bg-linear-to-b from-[#414244] to-[#38393a]">
        <span className="ml-[18px] h-[24px] w-[24px] rounded-full bg-[#575859]" />
        <span className="ml-[16px] h-[24px] w-[24px] rounded-full bg-[#575859]" />
        <span className="ml-[16px] h-[24px] w-[24px] rounded-full bg-[#575859]" />
        <span className="ml-[1266px] text-[26.7px] leading-none text-[#a8a8a8]">3D Slicer 4.11.20210226</span>
      </div>
      <Toolbar />
      <div className="flex min-h-0 flex-1 pt-px">
        <LeftPanel />
        <div className="flex min-w-0 flex-1 flex-col bg-black">
          <div className="flex h-[44px] shrink-0">
            <ViewBar n="1" w="w-[807px]" />
            <ViewBar n="2" w="flex-1" />
          </div>
          <div className="flex h-[810px] shrink-0">
            <div className="w-[807px] border-r border-[#333]" />
          </div>
          <div className="flex min-h-0 flex-1">
            <Landmarks />
            <Chart />
            <TableView />
          </div>
        </div>
      </div>
      <div className="absolute left-[1455px] top-[1116px] z-[5] h-[120px] w-[1597px] bg-linear-to-b from-black/55 to-transparent" />
      <FileDialog />
      <Annotations />
    </div>
  );
}
